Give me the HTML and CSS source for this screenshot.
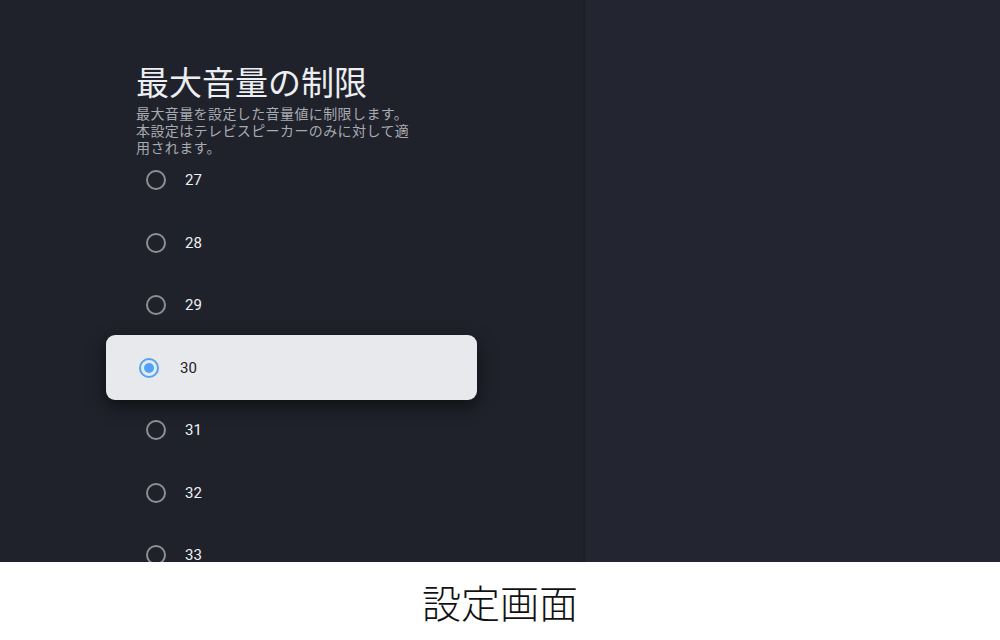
FILE: index.html
```html
<!DOCTYPE html>
<html lang="ja">
<head>
    <meta charset="UTF-8">
    <meta name="viewport" content="width=device-width, initial-scale=1.0">
    <title>設定画面</title>
    <link rel="stylesheet" href="styles.css">
</head>
<body>
    <div class="screen">
        <!-- Settings panel -->
        <div class="panel">
            <h1 class="panel-title">最大音量の制限</h1>
            <p class="panel-desc">最大音量を設定した音量値に制限します。本設定はテレビスピーカーのみに対して適用されます。</p>

            <div class="option-list">
                <div class="option"><span class="radio"></span><span class="option-label">27</span></div>
                <div class="option"><span class="radio"></span><span class="option-label">28</span></div>
                <div class="option"><span class="radio"></span><span class="option-label">29</span></div>
                <div class="option selected"><span class="radio"></span><span class="option-label">30</span></div>
                <div class="option"><span class="radio"></span><span class="option-label">31</span></div>
                <div class="option"><span class="radio"></span><span class="option-label">32</span></div>
                <div class="option"><span class="radio"></span><span class="option-label">33</span></div>
                <div class="option"><span class="radio"></span><span class="option-label">34</span></div>
            </div>
        </div>

        <!-- Empty right side -->
        <div class="side"></div>
    </div>

    <div class="caption">設定画面</div>
</body>
</html>
```

FILE: styles.css
```css
/* General body styling */
body {
    margin: 0;
    font-family: 'Roboto', 'Noto Sans CJK JP', sans-serif;
    background-color: #ffffff;
}

/* TV screen area */
.screen {
    display: flex;
    height: 562px;
    overflow: hidden;
}

.panel {
    width: 585px;
    padding: 61px 0 0 136px;
    box-sizing: border-box;
    background-color: #1f222b;
    border-right: 2px solid #1b1e26;
    overflow: hidden;
}

.side {
    flex: 1;
    background-color: #232631;
}

/* Heading */
.panel-title {
    margin: 0 0 4px 0;
    font-family: 'Noto Sans CJK JP', sans-serif;
    font-size: 33px;
    font-weight: 400;
    line-height: 40px;
    color: #eceef1;
}

.panel-desc {
    width: 280px;
    margin: 0;
    font-family: 'Noto Sans CJK JP', sans-serif;
    font-size: 14px;
    letter-spacing: 0.4px;
    line-height: 17px;
    color: #a8abb2;
}

/* Radio list */
.option-list {
    display: flex;
    flex-direction: column;
    gap: 22.5px;
    margin: 4px 0 0 10px;
}

.option {
    display: flex;
    align-items: center;
    gap: 19px;
    height: 40px;
    flex-shrink: 0;
}

.radio {
    width: 20px;
    height: 20px;
    box-sizing: border-box;
    border: 2px solid #8d8f95;
    border-radius: 50%;
    display: flex;
    align-items: center;
    justify-content: center;
}

.option-label {
    font-size: 15px;
    color: #eef0f3;
}

/* Focused item */
.option.selected {
    height: 65px;
    width: 371px;
    margin: -12.5px 0 -12.5px -40px;
    padding-left: 33px;
    box-sizing: border-box;
    gap: 21px;
    background-color: #e8e9ec;
    border-radius: 9px;
    box-shadow: 0 6px 18px rgba(0, 0, 0, 0.55);
}

.option.selected .radio {
    border-color: #4fa4f6;
}

.option.selected .radio::after {
    content: "";
    width: 10px;
    height: 10px;
    border-radius: 50%;
    background-color: #4fa4f6;
}

.option.selected .option-label {
    color: #1f2024;
}

/* Caption under the screenshot */
.caption {
    height: 78px;
    display: flex;
    align-items: center;
    justify-content: center;
    font-family: 'Noto Sans CJK JP', sans-serif;
    font-size: 39px;
    font-weight: 300;
    color: #111111;
}
```
